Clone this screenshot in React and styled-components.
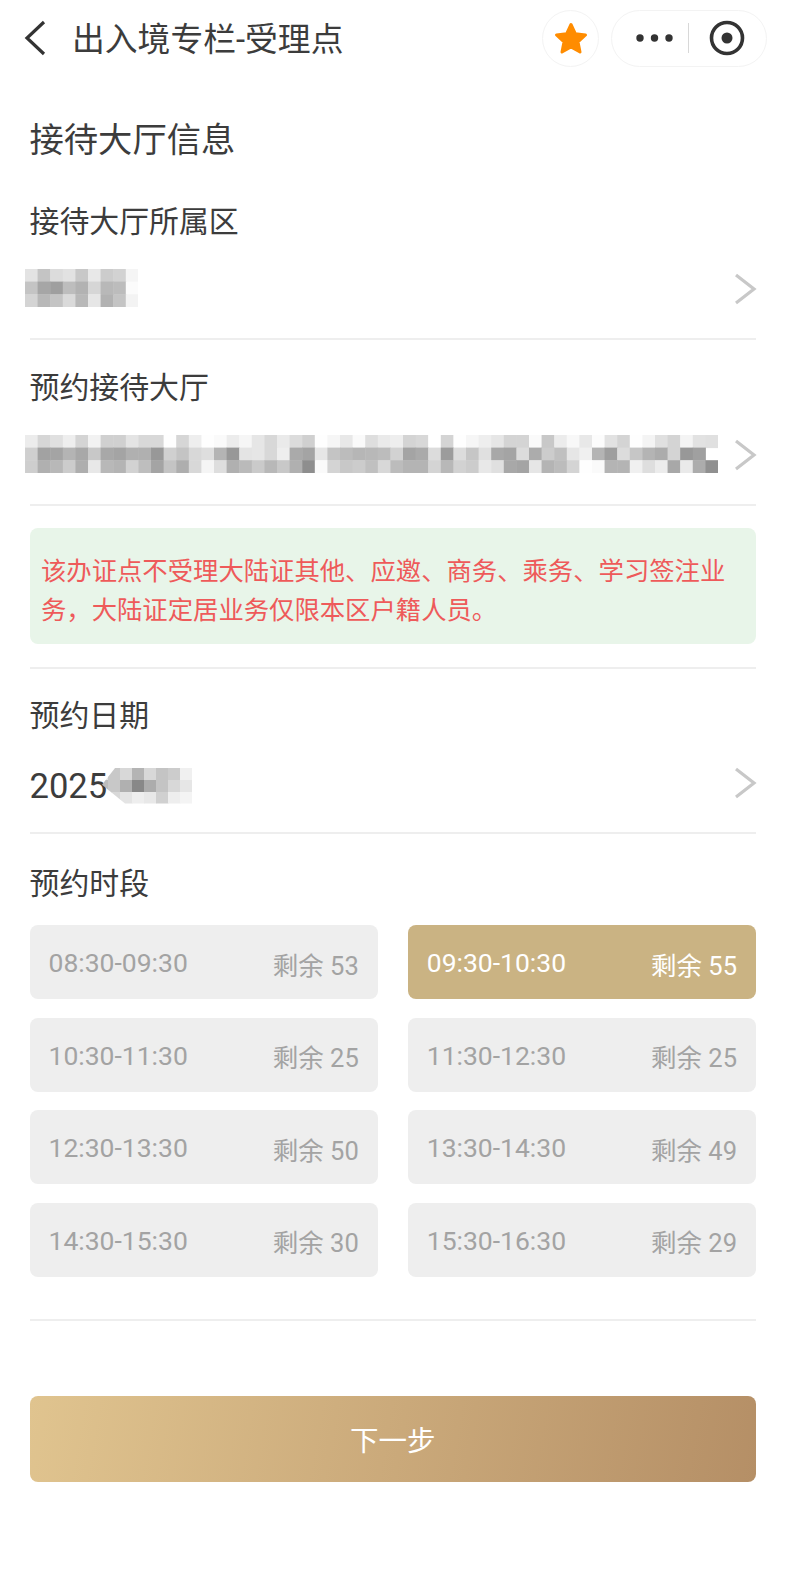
import styled, { createGlobalStyle } from "styled-components";

const DISTRICT_BLUR = [
  "e3 c4 dc e2 c8 e8 cc d2 f5",
  "c4 a6 9f bd b2 d6 b8 bc fb",
  "d4 b8 c4 da b8 e6 b2 c4 f3",
];

const HALL_BLUR = [
  "ec d6 e0 ee d4 f2 d0 d0 e4 d8 d8 fe d6 ee fe fa ec f6 e6 d8 ea dc d0 fe f6 e8 fa de ea ee d4 d8 ff d4 fe f6 ee e6 d4 d4 fa c8 ec f8 e8 fc e2 d4 fe f4 e0 d4 f4 e2 e0",
  "cf a2 a4 b4 a8 c8 a8 a4 b0 b0 98 d0 c4 d8 de b4 98 e4 e6 d8 ee aa a4 e6 c4 bc b6 b8 bc d2 a4 aa dc 9c dc c6 e0 a8 a4 dc ac cc c0 e6 f0 b4 9e dc c6 b4 ac d4 98 a0",
  "ce b0 b8 cc ae e8 b8 b4 d2 be a4 c4 ae d8 f5 de b0 ba ca b8 c8 b0 8e fa d4 c8 cc c0 d8 bc b4 b4 d4 b8 d2 cc e8 e0 a8 a4 e6 b4 bc d4 fe fa b4 b4 f0 de ec a8 ea ac 90",
];

const DATE_BLUR = [
  "e4 c8 d8 b4 d8 c4 cc f0",
  "bc c8 b0 88 ac c4 d8 e6",
  "e4 d8 e4 ee e8 d0 ee f4",
];

const SLOTS = [
  { time: "08:30-09:30", left: 53 },
  { time: "09:30-10:30", left: 55, active: true },
  { time: "10:30-11:30", left: 25 },
  { time: "11:30-12:30", left: 25 },
  { time: "12:30-13:30", left: 50 },
  { time: "13:30-14:30", left: 49 },
  { time: "14:30-15:30", left: 30 },
  { time: "15:30-16:30", left: 29 },
];

// pixelated patches that hide personal data in the screenshot
const Mosaic = ({ rows, cell, clip, className }) => {
  const grid = rows.map((r) => r.split(" "));
  const width = grid[0].length * cell;
  const height = grid.length * cell;
  return (
    <svg
      className={className}
      width={width}
      height={height}
      viewBox={`0 0 ${width} ${height}`}
      style={{ clipPath: clip }}
    >
      {grid.map((row, y) =>
        row.map((v, x) => (
          <rect
            key={`${x}-${y}`}
            x={x * cell}
            y={y * cell}
            width={cell + 0.5}
            height={cell + 0.5}
            fill={`#${v}${v}${v}`}
          />
        ))
      )}
    </svg>
  );
};

const Chevron = () => (
  <ChevronIcon width="24" height="32" viewBox="0 0 24 32">
    <polyline points="3,2 21,16 3,30" />
  </ChevronIcon>
);

const App = () => {
  return (
    <Page>
      <GlobalStyle />
      <NavBar>
        <BackIcon width="24" height="36" viewBox="0 0 24 36">
          <polyline points="21,2 4,18 21,34" />
        </BackIcon>
        <NavTitle>出入境专栏-受理点</NavTitle>
        <StarButton>
          <svg width="36" height="34" viewBox="0 0 36 34">
            <polygon
              points="18,3.5 22.4,12.8 32.5,14 25,20.8 27,31 18,26 9,31 11,20.8 3.5,14 13.6,12.8"
              fill="#ff8c00"
              stroke="#ff8c00"
              strokeWidth="3"
              strokeLinejoin="round"
            />
          </svg>
        </StarButton>
        <Capsule>
          <svg width="40" height="8" viewBox="0 0 40 8">
            <circle cx="5" cy="4" r="3.7" fill="#333" />
            <circle cx="19.5" cy="4" r="3.7" fill="#333" />
            <circle cx="34" cy="4" r="3.7" fill="#333" />
          </svg>
          <CapsuleLine />
          <svg width="36" height="36" viewBox="0 0 36 36">
            <circle cx="18" cy="18" r="15.5" fill="none" stroke="#333" strokeWidth="3.6" />
            <circle cx="18" cy="18" r="5.5" fill="#333" />
          </svg>
        </Capsule>
      </NavBar>

      <Content>
        <SectionTitle>接待大厅信息</SectionTitle>

        <FieldLabel $top={35}>接待大厅所属区</FieldLabel>
        <ValueRow>
          <BlurPatch rows={DISTRICT_BLUR} cell={12.6} />
          <Chevron />
        </ValueRow>

        <FieldLabel $top={26}>预约接待大厅</FieldLabel>
        <ValueRow>
          <BlurPatch rows={HALL_BLUR} cell={12.6} />
          <Chevron />
        </ValueRow>

        <NoticeBlock>
          <Notice>
            该办证点不受理大陆证其他、应邀、商务、乘务、学习签注业务，大陆证定居业务仅限本区户籍人员。
          </Notice>
        </NoticeBlock>

        <FieldLabel $top={25}>预约日期</FieldLabel>
        <ValueRow>
          <DateValue>
            <span>2025</span>
            <DateBlur
              rows={DATE_BLUR}
              cell={12}
              clip="polygon(6% 48%, 20% 0, 100% 0, 100% 100%, 30% 100%)"
            />
          </DateValue>
          <Chevron />
        </ValueRow>

        <FieldLabel $top={28}>预约时段</FieldLabel>
        <SlotBlock>
          <SlotGrid>
            {SLOTS.map((slot) => (
              <Slot key={slot.time} $active={slot.active}>
                <SlotTime>{slot.time}</SlotTime>
                <SlotLeft>剩余 {slot.left}</SlotLeft>
              </Slot>
            ))}
          </SlotGrid>
        </SlotBlock>

        <NextButton>下一步</NextButton>
      </Content>
    </Page>
  );
};

const GlobalStyle = createGlobalStyle`
  html, body {
    margin: 0;
    background: #fff;
  }
  * {
    box-sizing: border-box;
  }
`;

const Page = styled.div`
  width: 795px;
  height: 1595px;
  overflow: hidden;
  color: #3c3c3c;
  background: #fff;
  font-family: Roboto, "Noto Sans CJK SC", sans-serif;
`;

const NavBar = styled.div`
  display: flex;
  align-items: center;
  height: 76px;
  padding: 0 28px 0 23px;
`;

const BackIcon = styled.svg`
  flex: none;
  fill: none;
  stroke: #333;
  stroke-width: 3.2;
`;

const NavTitle = styled.div`
  flex: 1;
  margin: 3px 0 0 25px;
  font-size: 32.8px;
  line-height: 44px;
`;

const StarButton = styled.div`
  display: flex;
  align-items: center;
  justify-content: center;
  width: 57px;
  height: 57px;
  margin-right: 12px;
  border: 1.5px solid #f3f3f3;
  border-radius: 50%;
`;

const Capsule = styled.div`
  display: flex;
  align-items: center;
  width: 156px;
  height: 57px;
  padding: 0 21px 0 23px;
  border: 1.5px solid #f3f3f3;
  border-radius: 29px;
`;

const CapsuleLine = styled.div`
  width: 1.5px;
  height: 30px;
  margin: 0 20px 0 auto;
  background: #d8d8d8;
`;

const Content = styled.div`
  padding: 0 39px 0 29.5px;
`;

const SectionTitle = styled.div`
  margin-top: 39px;
  font-size: 34.3px;
  line-height: 50px;
`;

const FieldLabel = styled.div`
  margin-top: ${(p) => p.$top}px;
  font-size: 29.9px;
  line-height: 44px;
`;

const ValueRow = styled.div`
  display: flex;
  align-items: center;
  justify-content: space-between;
  height: 96px;
  padding-bottom: 6px;
  border-bottom: 2px solid #eee;
`;

const ChevronIcon = styled.svg`
  flex: none;
  margin-top: 2px;
  margin-right: -1px;
  fill: none;
  stroke: #c8c8c8;
  stroke-width: 3.2;
`;

const BlurPatch = styled(Mosaic)`
  flex: none;
  margin-left: -4.5px;
`;

const DateValue = styled.div`
  display: flex;
  align-items: center;
  padding-top: 7px;
  font-size: 34.6px;
  line-height: 44px;
`;

const DateBlur = styled(Mosaic)`
  flex: none;
  margin-left: -11px;
`;

const NoticeBlock = styled.div`
  padding: 22px 0 23px;
  border-bottom: 2px solid #eee;
`;

const Notice = styled.div`
  padding: 24px 11.5px 15px;
  border-radius: 8px;
  background: #e8f5e9;
  color: #ee5a5a;
  font-size: 25.35px;
  line-height: 38.5px;
`;

const SlotBlock = styled.div`
  padding: 19px 0 42px;
  border-bottom: 2px solid #eee;
`;

const SlotGrid = styled.div`
  display: grid;
  grid-template-columns: 1fr 1fr;
  column-gap: 30px;
  row-gap: 18.5px;
`;

const Slot = styled.div`
  display: flex;
  align-items: center;
  justify-content: space-between;
  height: 74px;
  padding: 0 19px;
  border-radius: 8px;
  background: ${(p) => (p.$active ? "#cab383" : "#eee")};
  color: ${(p) => (p.$active ? "#fff" : "#a3a3a3")};
`;

const SlotTime = styled.span`
  font-size: 26.5px;
  line-height: 36px;
  margin-top: 2px;
`;

const SlotLeft = styled.span`
  font-size: 25.5px;
  line-height: 36px;
  margin-top: 7px;
`;

const NextButton = styled.div`
  display: flex;
  align-items: center;
  justify-content: center;
  height: 86px;
  margin-top: 75px;
  border-radius: 8px;
  background: linear-gradient(100deg, #e0c48f 0%, #b58f66 100%);
  color: #fff;
  font-size: 28.5px;
`;

export default App;
